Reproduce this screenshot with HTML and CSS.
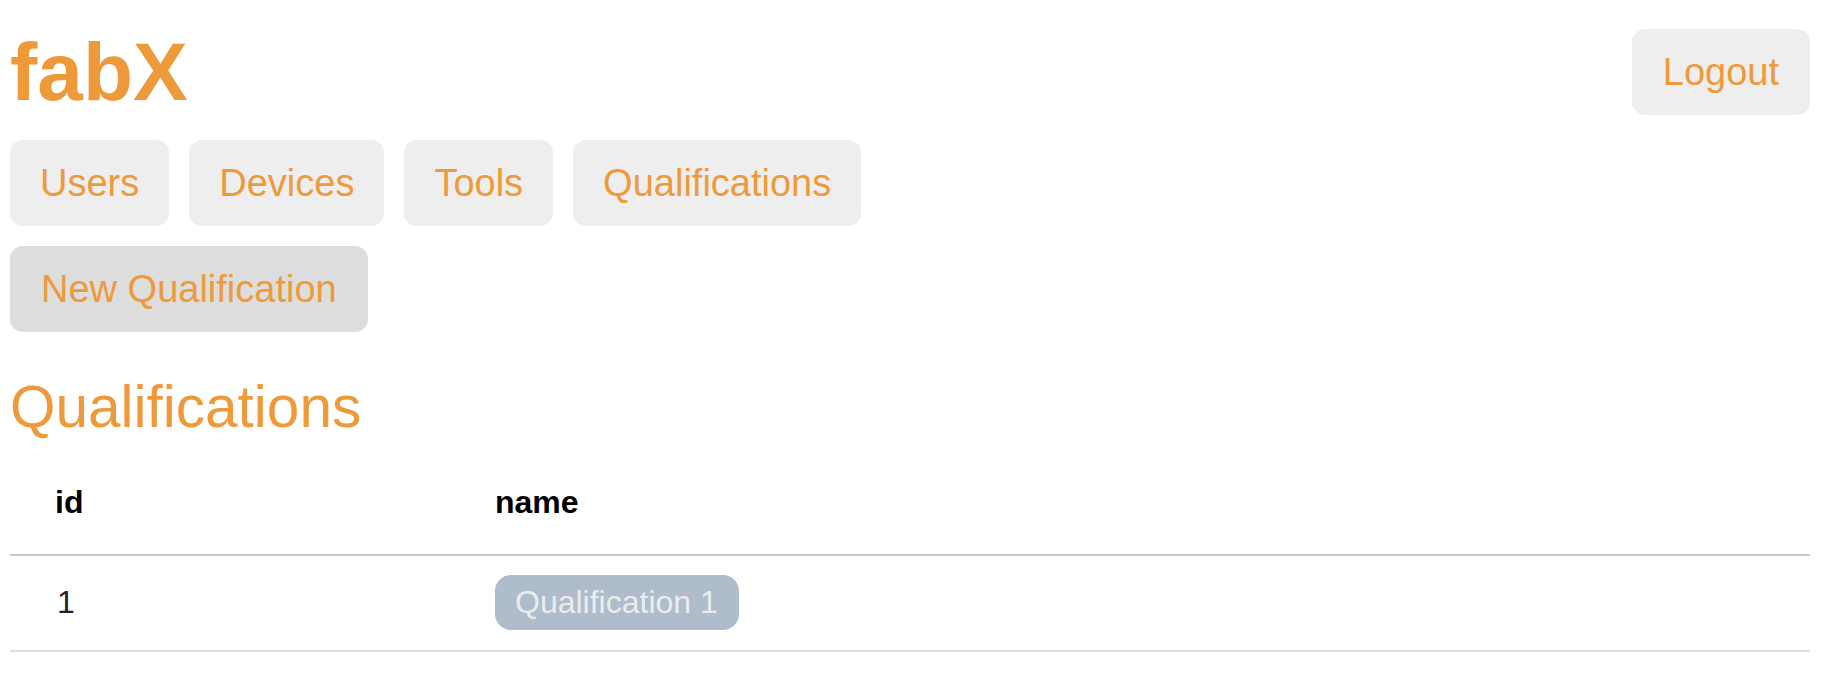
FILE: index.html
```html
<!DOCTYPE html>
<html lang="en">
<head>
<meta charset="utf-8">
<title>fabX</title>
<link rel="stylesheet" href="styles.css">
</head>
<body>
<header class="top">
  <h1 class="brand">fabX</h1>
  <a class="btn" href="#">Logout</a>
</header>
<nav class="nav">
  <a class="btn" href="#">Users</a>
  <a class="btn" href="#">Devices</a>
  <a class="btn" href="#">Tools</a>
  <a class="btn" href="#">Qualifications</a>
</nav>
<div class="actions">
  <a class="btn btn-dark" href="#">New Qualification</a>
</div>
<h2 class="title">Qualifications</h2>
<table class="list">
  <colgroup>
    <col class="col-id">
    <col>
  </colgroup>
  <thead>
    <tr><th>id</th><th>name</th></tr>
  </thead>
  <tbody>
    <tr><td>1</td><td><span class="badge">Qualification 1</span></td></tr>
  </tbody>
</table>
</body>
</html>
```

FILE: styles.css
```css
* { box-sizing: border-box; }

html, body {
  margin: 0;
  background: #ffffff;
}

body {
  padding: 0 14px 0 10px;
  font-family: "Liberation Sans", Arial, Helvetica, sans-serif;
  color: #222222;
}

.top {
  display: flex;
  justify-content: space-between;
  align-items: center;
  padding-top: 26px;
}

.brand {
  margin: 0;
  font-size: 82px;
  font-weight: bold;
  color: #ee9a3a;
  line-height: 92px;
}

.btn {
  display: inline-block;
  font-size: 38px;
  line-height: 44px;
  padding: 21px 31px;
  background: #eeeeee;
  color: #ee9a3a;
  text-decoration: none;
  border-radius: 13px;
  white-space: nowrap;
}

.btn-dark {
  background: #dddddd;
}

.nav {
  display: flex;
  gap: 20px;
  margin-top: 22px;
}

.nav .btn {
  padding: 21px 30px;
}

.actions {
  display: flex;
  margin-top: 20px;
}

.title {
  margin: 42px 0 0;
  font-size: 58.5px;
  font-weight: normal;
  line-height: 66px;
  color: #ee9a3a;
}

.list {
  width: 100%;
  margin-top: 10px;
  border-collapse: collapse;
  table-layout: fixed;
  font-size: 32px;
}

.col-id { width: 440px; }

.list th {
  text-align: left;
  font-weight: bold;
  color: #000000;
  line-height: 37px;
  padding: 34px 45px 33px;
  border-bottom: 2px solid #c8c8c8;
}

.list td {
  line-height: 55px;
  padding: 19px 45px 20px;
  border-bottom: 2px solid #dedede;
  color: #222222;
}

.list td:first-child {
  padding-left: 47px;
}

.badge {
  display: inline-block;
  vertical-align: top;
  line-height: 37px;
  padding: 9px 21px 9px 20px;
  border-radius: 16px;
  background: #aebccb;
  color: #ececec;
}
```
